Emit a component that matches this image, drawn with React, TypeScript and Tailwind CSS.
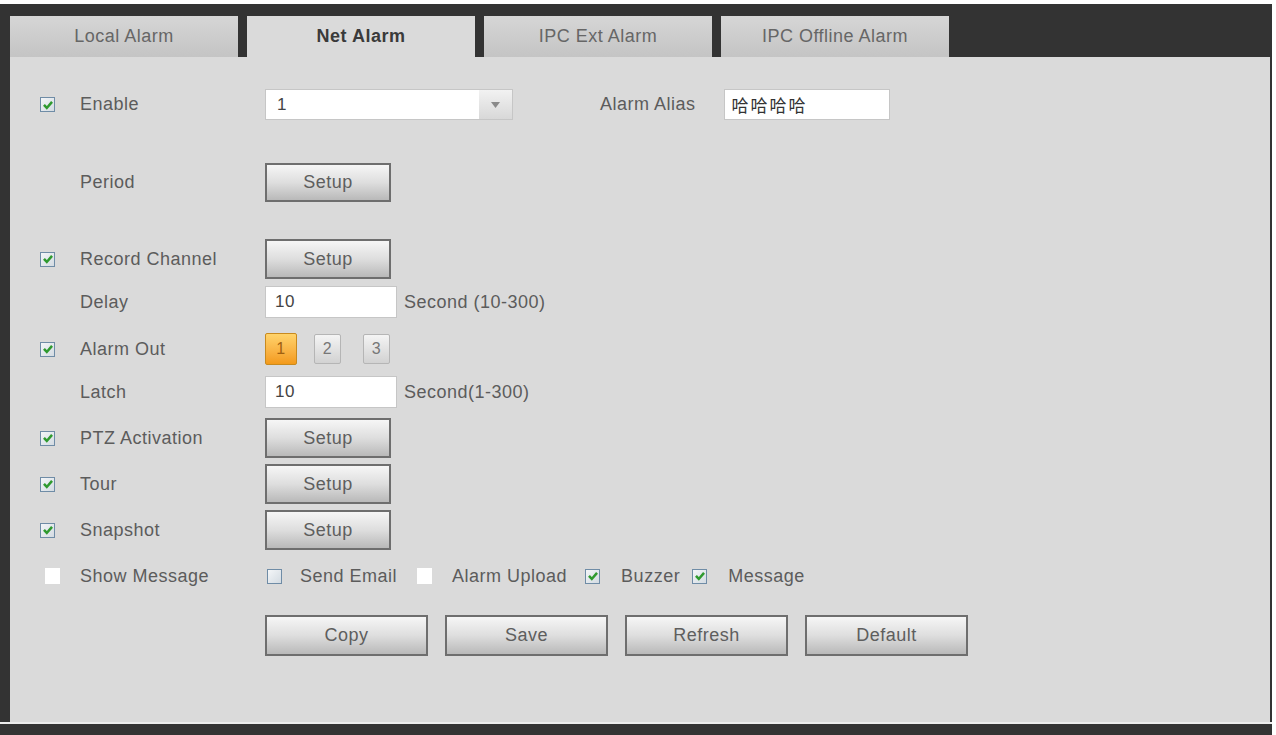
import React from "react";

const font = { fontFamily: '"Liberation Sans", Arial, "Noto Sans CJK SC", sans-serif' };

function Check({ checked = true, variant = "normal" }: { checked?: boolean; variant?: "normal" | "blank" }) {
  if (variant === "blank") {
    return <span className="block h-[16px] w-[15px] bg-white" />;
  }
  return (
    <span className="flex h-[15px] w-[15px] items-center justify-center border border-[#6f8ca6] bg-gradient-to-br from-[#f4f6f8] to-[#d3dbe2]">
      {checked && (
        <svg width="12" height="12" viewBox="0 0 11 11">
          <path d="M1.8 5.4 L4.4 8.2 L9.2 2.6" fill="none" stroke="#2f9a2f" strokeWidth="2.3" />
        </svg>
      )}
    </span>
  );
}

function SetupButton({ label = "Setup", w = "w-[126px]", h = "h-[40px]" }: { label?: string; w?: string; h?: string }) {
  return (
    <button
      type="button"
      className={`${w} ${h} flex items-center justify-center border-2 border-[#6e6e6e] bg-gradient-to-b from-[#f6f6f6] via-[#dedede] to-[#b9b9b9] text-[18px] tracking-[0.5px] text-[#5e5e5e]`}
    >
      {label}
    </button>
  );
}

function Row({
  check,
  label,
  className = "",
  children,
}: {
  check?: React.ReactNode;
  label: string;
  className?: string;
  children?: React.ReactNode;
}) {
  return (
    <div className={`flex items-center ${className}`}>
      <div className="flex w-[40px] justify-start">{check}</div>
      <div className="w-[185px] text-[#5c5c5c]">{label}</div>
      <div className="flex items-center">{children}</div>
    </div>
  );
}

function NumInput({ value }: { value: string }) {
  return (
    <div className="flex h-[32px] w-[132px] items-center border border-[#c6c6c6] bg-white pl-[9px] text-[17px] text-[#444]">
      {value}
    </div>
  );
}

export default function App() {
  const tabs = ["Local Alarm", "Net Alarm", "IPC Ext Alarm", "IPC Offline Alarm"];
  return (
    <div className="h-[735px] w-[1276px] overflow-hidden bg-white pt-[4px] text-[18px] tracking-[0.5px]" style={font}>
      <div className="flex h-[731px] w-[1272px] flex-col bg-[#333333] pl-[10px] pr-[2px]">
        <div className="flex gap-[9px] pt-[12px]">
          {tabs.map((t, i) =>
            i === 1 ? (
              <div key={t} className="flex h-[41px] w-[228px] items-center justify-center bg-[#dadada] font-bold text-[#3a3a3a]">
                {t}
              </div>
            ) : (
              <div
                key={t}
                className="flex h-[41px] w-[228px] items-center justify-center bg-gradient-to-b from-[#d6d6d6] to-[#c4c4c4] text-[#666]"
              >
                {t}
              </div>
            )
          )}
        </div>

        <div className="h-[665px] bg-[#dadada] pl-[30px] text-[#5c5c5c]">
          <Row className="mt-[32px] h-[31px]" check={<Check />} label="Enable">
            <div className="flex h-[31px] w-[248px] border border-[#c6c6c6] bg-white">
              <div className="flex flex-1 items-center pl-[11px] text-[17px] text-[#444]">1</div>
              <div className="flex w-[33px] items-center justify-center bg-gradient-to-b from-[#f2f2f2] to-[#d8d8d8]">
                <svg width="9" height="6" viewBox="0 0 9 6">
                  <path d="M0 0 H9 L4.5 6 Z" fill="#8a8a8a" />
                </svg>
              </div>
            </div>
            <span className="ml-[87px] text-[#5c5c5c]">Alarm Alias</span>
            <div
              className="ml-[28px] flex h-[31px] w-[166px] items-center border border-[#c6c6c6] bg-white pl-[7px] text-[17px] tracking-[2px] text-[#333]"
              style={{ fontFamily: '"Noto Sans CJK SC", sans-serif' }}
            >
              哈哈哈哈
            </div>
          </Row>

          <Row className="mt-[43px] h-[39px]" label="Period">
            <SetupButton h="h-[39px]" />
          </Row>

          <Row className="mt-[37px] h-[40px]" check={<Check />} label="Record Channel">
            <SetupButton />
          </Row>

          <Row className="mt-[7px] h-[32px]" label="Delay">
            <NumInput value="10" />
            <span className="ml-[7px]">Second (10-300)</span>
          </Row>

          <Row className="mt-[15px] h-[32px]" check={<Check />} label="Alarm Out">
            <div className="flex h-[32px] w-[32px] items-center justify-center rounded-[2px] border border-[#c98a1e] bg-gradient-to-b from-[#ffd36a] to-[#f39a18] text-[16px] text-[#a06010]">
              1
            </div>
            <div className="ml-[17px] flex h-[30px] w-[27px] items-center justify-center rounded-[2px] border border-[#b5b5b5] bg-gradient-to-b from-[#f4f4f4] to-[#d2d2d2] text-[16px] text-[#777]">
              2
            </div>
            <div className="ml-[22px] flex h-[30px] w-[27px] items-center justify-center rounded-[2px] border border-[#b5b5b5] bg-gradient-to-b from-[#f4f4f4] to-[#d2d2d2] text-[16px] text-[#777]">
              3
            </div>
          </Row>

          <Row className="mt-[11px] h-[32px]" label="Latch">
            <NumInput value="10" />
            <span className="ml-[7px]">Second(1-300)</span>
          </Row>

          <Row className="mt-[10px] h-[40px]" check={<Check />} label="PTZ Activation">
            <SetupButton />
          </Row>

          <Row className="mt-[6px] h-[40px]" check={<Check />} label="Tour">
            <SetupButton />
          </Row>

          <Row className="mt-[6px] h-[40px]" check={<Check />} label="Snapshot">
            <SetupButton />
          </Row>

          <Row className="mt-[14px] h-[24px]" check={<span className="ml-[5px] block"><Check variant="blank" /></span>} label="Show Message">
            <div className="flex items-center">
              <span className="ml-[2px]">
                <Check checked={false} />
              </span>
              <span className="ml-[18px]">Send Email</span>
              <span className="ml-[20px]">
                <Check variant="blank" />
              </span>
              <span className="ml-[20px]">Alarm Upload</span>
              <span className="ml-[18px]">
                <Check />
              </span>
              <span className="ml-[21px]">Buzzer</span>
              <span className="ml-[12px]">
                <Check />
              </span>
              <span className="ml-[21px]">Message</span>
            </div>
          </Row>

          <div className="mt-[27px] flex gap-[17px] pl-[225px]">
            {["Copy", "Save", "Refresh", "Default"].map((b) => (
              <SetupButton key={b} label={b} w="w-[163px]" h="h-[41px]" />
            ))}
          </div>
        </div>
        <div className="-ml-[10px] h-[2px] w-[1272px] bg-[#ececec]" />
      </div>
    </div>
  );
}
